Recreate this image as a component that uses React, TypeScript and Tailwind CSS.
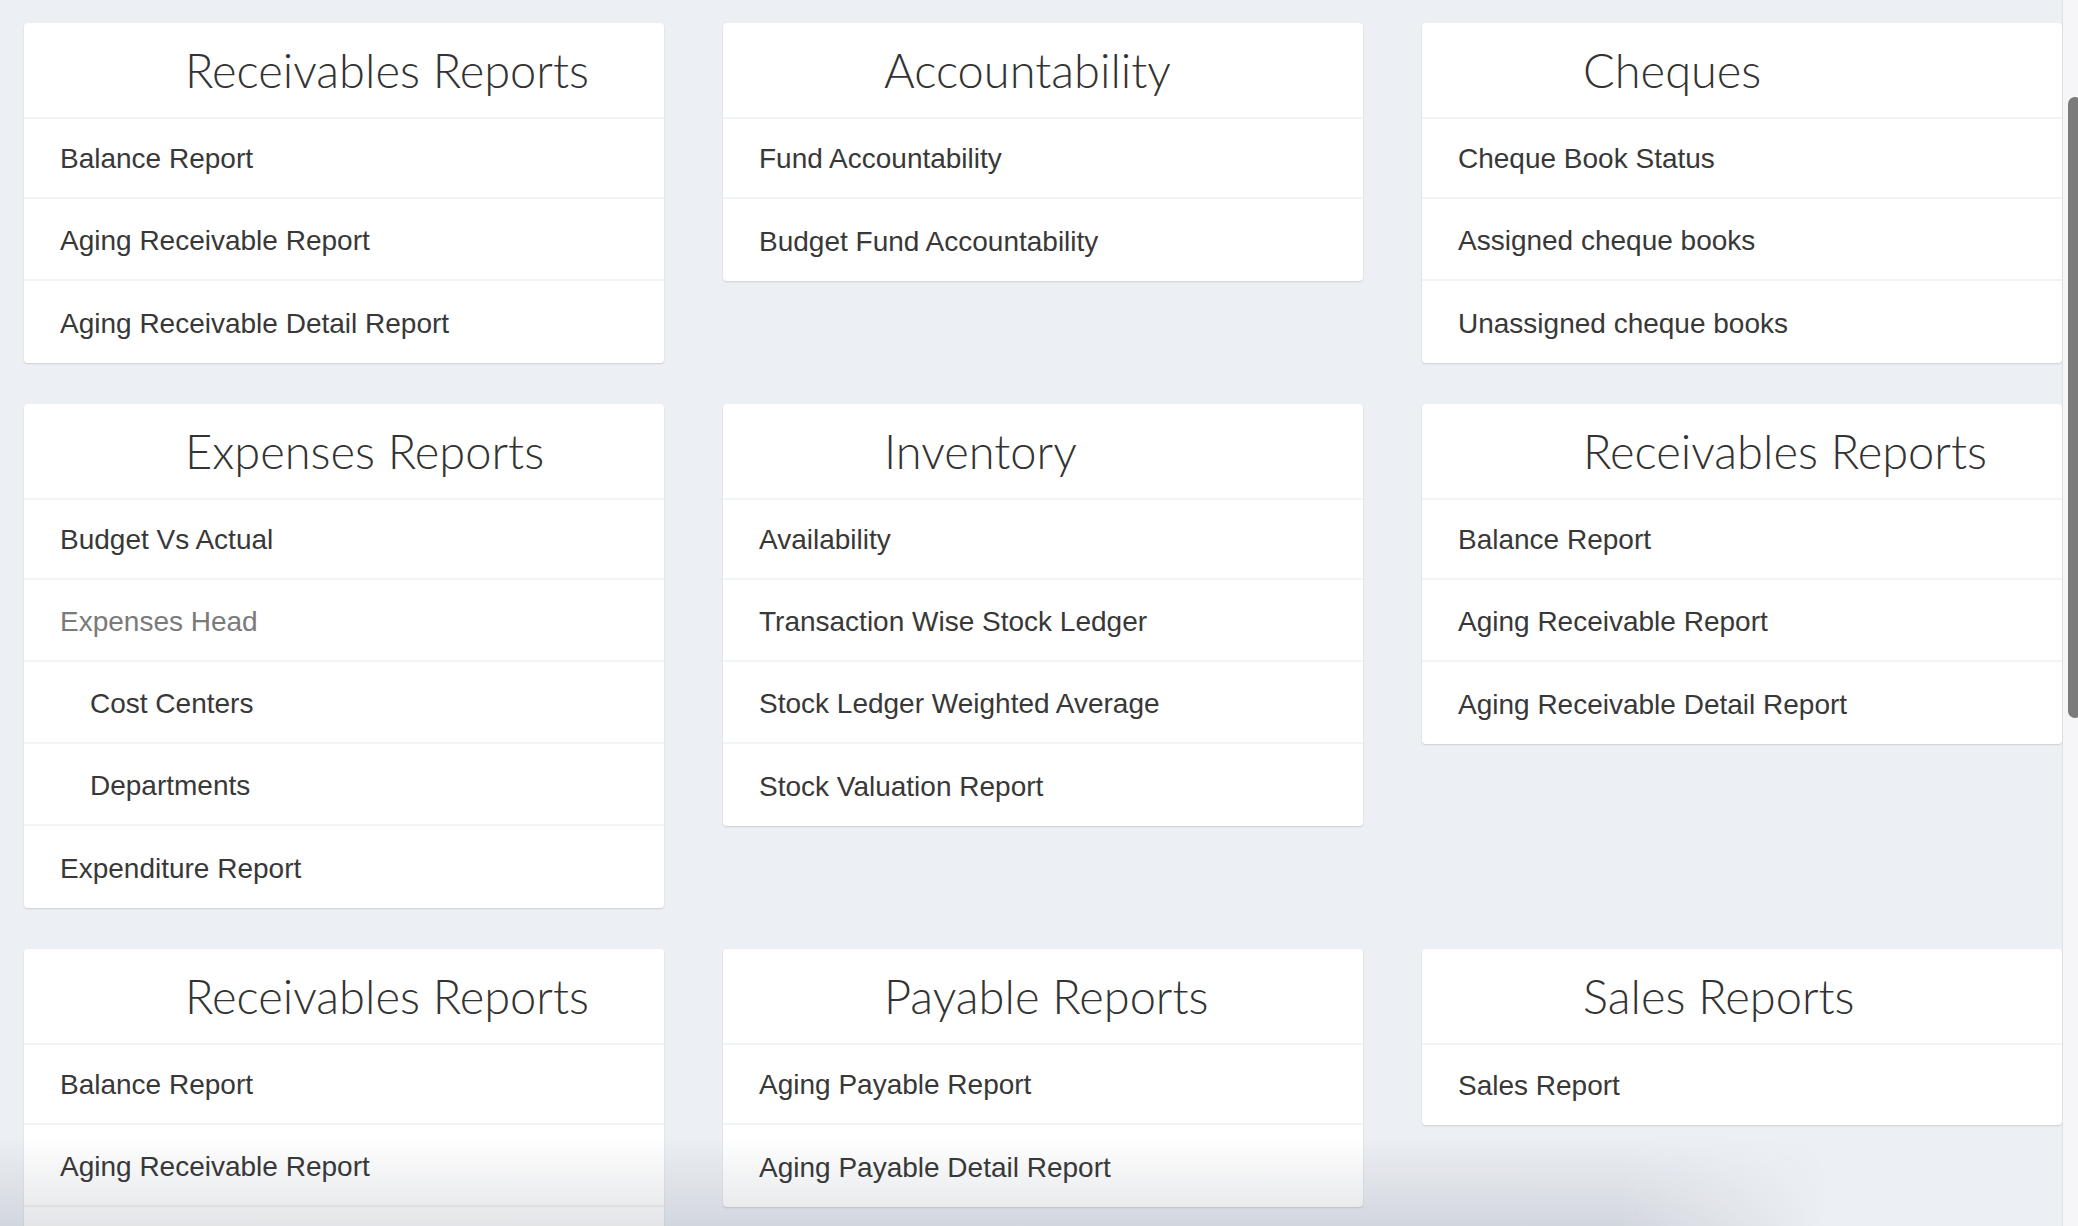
type Item = { label: string; muted?: boolean; indent?: boolean };
type Section = { title: string; items: Item[] };

const receivables: Section = {
  title: "Receivables Reports",
  items: [
    { label: "Balance Report" },
    { label: "Aging Receivable Report" },
    { label: "Aging Receivable Detail Report" },
  ],
};

const sections: Section[] = [
  receivables,
  {
    title: "Accountability",
    items: [{ label: "Fund Accountability" }, { label: "Budget Fund Accountability" }],
  },
  {
    title: "Cheques",
    items: [
      { label: "Cheque Book Status" },
      { label: "Assigned cheque books" },
      { label: "Unassigned cheque books" },
    ],
  },
  {
    title: "Expenses Reports",
    items: [
      { label: "Budget Vs Actual" },
      { label: "Expenses Head", muted: true },
      { label: "Cost Centers", indent: true },
      { label: "Departments", indent: true },
      { label: "Expenditure Report" },
    ],
  },
  {
    title: "Inventory",
    items: [
      { label: "Availability" },
      { label: "Transaction Wise Stock Ledger" },
      { label: "Stock Ledger Weighted Average" },
      { label: "Stock Valuation Report" },
    ],
  },
  receivables,
  receivables,
  {
    title: "Payable Reports",
    items: [{ label: "Aging Payable Report" }, { label: "Aging Payable Detail Report" }],
  },
  {
    title: "Sales Reports",
    items: [{ label: "Sales Report" }],
  },
];

const ReportCard = ({ section }: { section: Section }) => (
  <div className="bg-white rounded-[4px] shadow-[0_1px_2px_rgba(0,0,0,0.14)] overflow-hidden">
    <div className="h-[96px] border-b-2 border-[#f2f3f5] flex items-center pl-[161px]">
      <h2 className="text-[47px] font-light text-[#333] font-['Lato',sans-serif] leading-none">
        {section.title}
      </h2>
    </div>
    <ul className="divide-y-2 divide-[#f2f3f5]">
      {section.items.map((item, i) => (
        <li
          key={item.label}
          className={`${i === 0 ? "h-[80px] pt-[2px]" : "h-[82px] pt-[4px]"} flex items-center text-[28px] font-['Liberation_Sans',Arial,sans-serif] ${
            item.indent ? "pl-[66px]" : "pl-9"
          } ${item.muted ? "text-[#7a7a7a]" : "text-[#383838]"}`}
        >
          {item.label}
        </li>
      ))}
    </ul>
  </div>
);

export default function App() {
  return (
    <div className="relative h-screen w-full overflow-hidden bg-[#eceff4] flex">
      <main className="flex-1 pl-6 pt-[23px]">
        <div className="grid grid-cols-[repeat(3,640px)] gap-x-[59px] gap-y-[41px] items-start">
          {sections.map((s, i) => (
            <ReportCard key={i} section={s} />
          ))}
        </div>
      </main>

      {/* fake scrollbar */}
      <div className="w-[16px] shrink-0 border-l border-[#e0e0e2] bg-[#f6f6f8] pt-[97px] pl-[5px] overflow-hidden">
        <div className="h-[621px] w-[14px] rounded-[7px] bg-[#7b7b7b]" />
      </div>

      {/* bottom shade */}
      <div className="pointer-events-none absolute inset-x-0 bottom-0 h-[90px] bg-[linear-gradient(to_bottom,transparent,rgba(60,70,90,0.14))] [mask-image:linear-gradient(to_right,black_78%,transparent_88%)]" />
    </div>
  );
}
